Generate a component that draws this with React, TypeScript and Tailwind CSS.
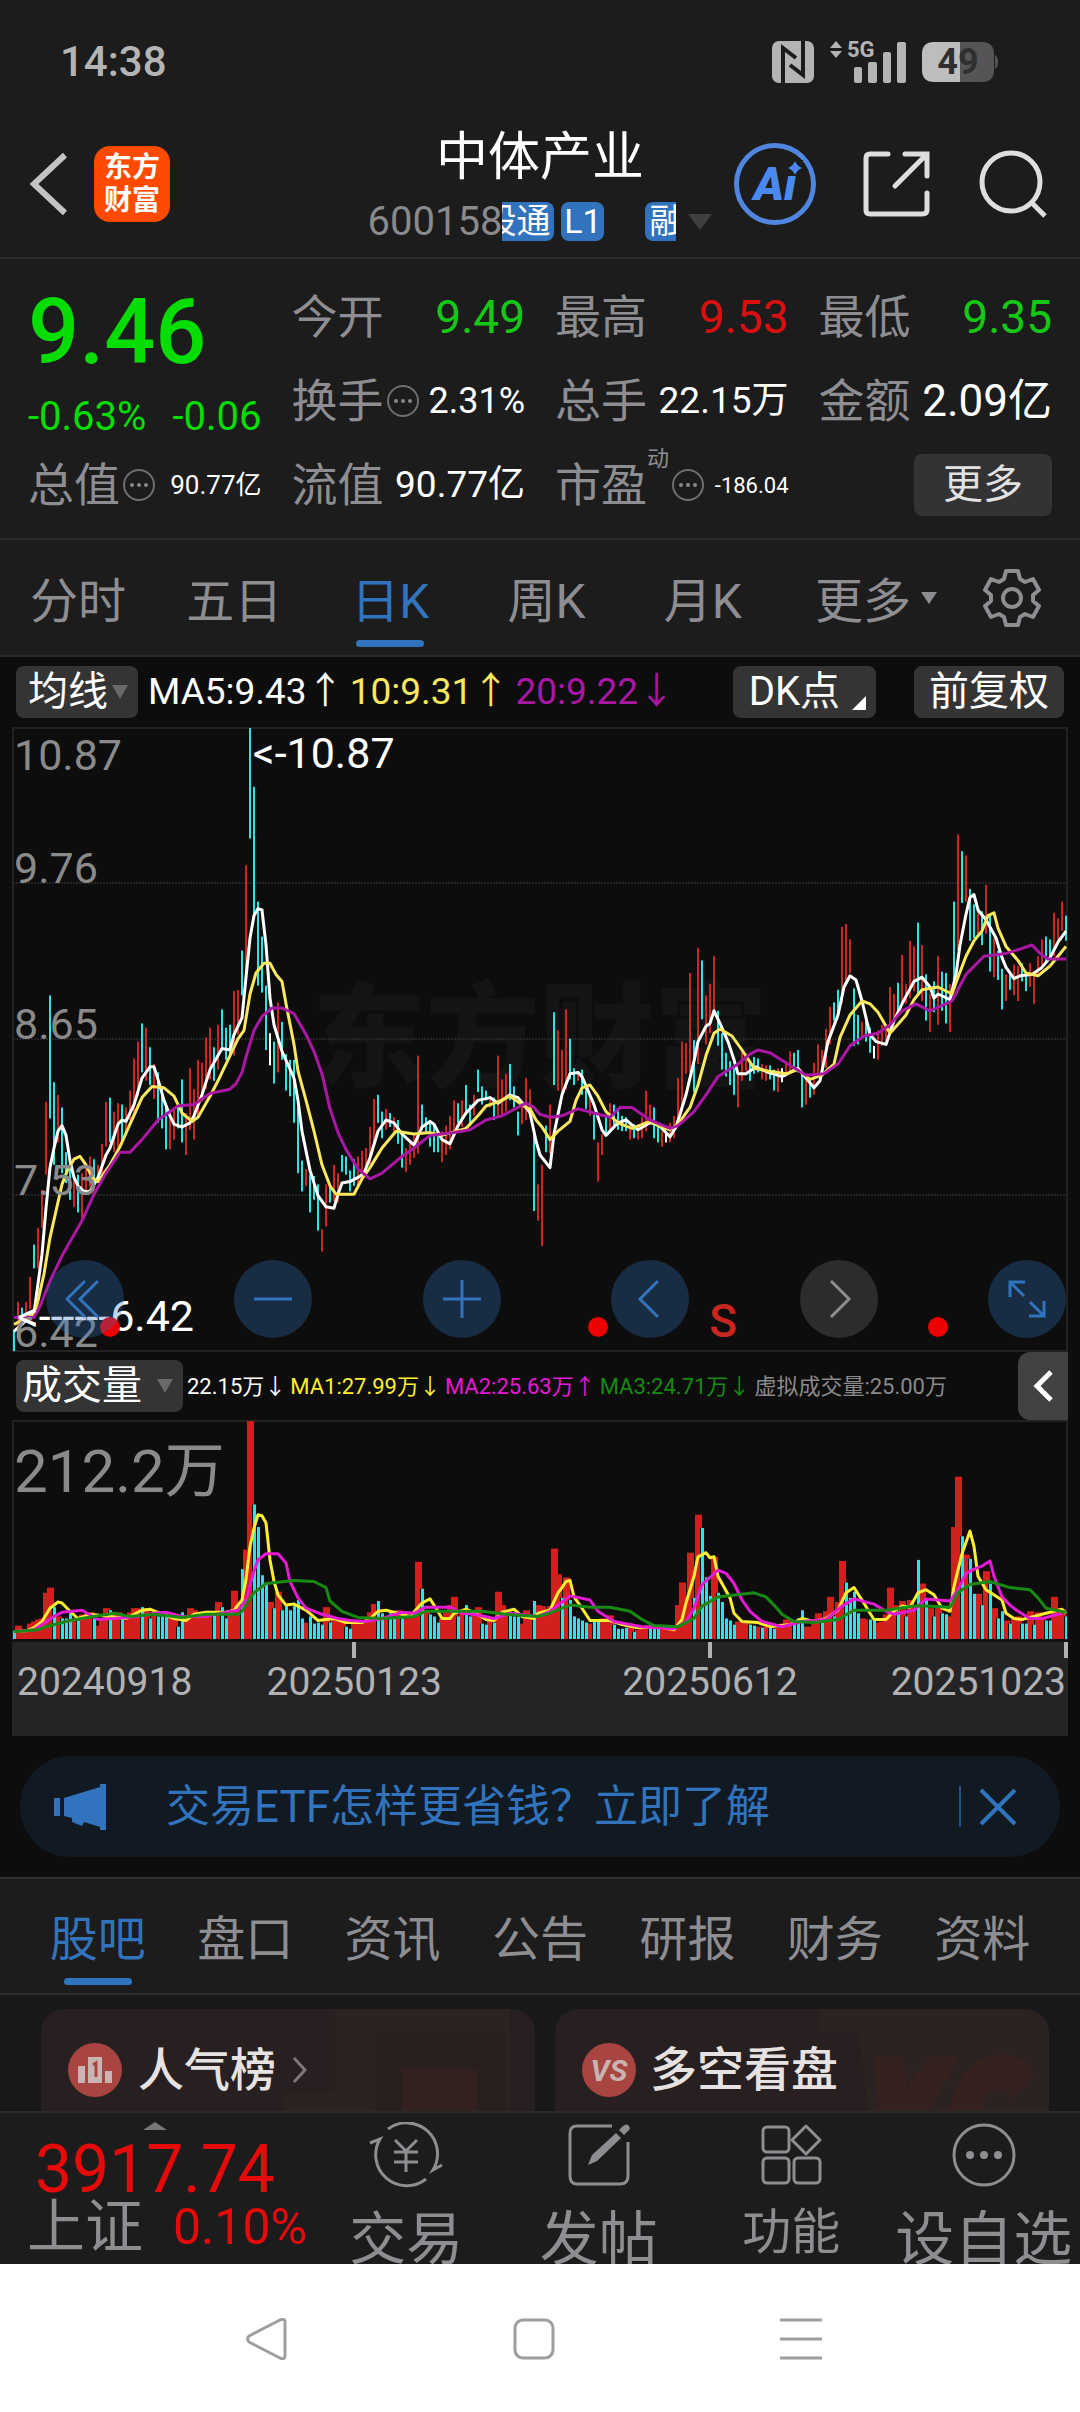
import React from 'react'

const FONT = "font-['Roboto','Noto_Sans_CJK_SC',sans-serif]"

/* ---------- data ---------- */

// r = up, c = down, w = flat; then high,low in cents
const CANDLES = `c657,642 r677,651 c673,663 r677,667 r695,672 c718,701 r730,701 r757,730 r820,768 c896,808
c834,775 r825,791 c816,769 c784,762 c778,750 r768,745 c768,741 r769,736 r773,754 r781,759
c779,763 r775,762 r790,768 r820,788 c823,791 r813,784 r819,787 c818,791 r816,796 r828,807
r851,813 r863,824 c876,841 r873,835 c859,832 r847,822 c841,805 c831,801 c818,786 r813,786
r816,793 c817,801 c836,791 r812,782 r844,800 r829,793 r850,810 r848,820 r866,829 r873,836
c859,835 r875,843 c886,857 c873,850 c875,854 r899,853 r900,868 c928,896 r989,904 c1087,1008
c1045,954 c963,903 c938,898 c903,857 w869,846 c863,833 r891,841 c877,850 c854,828 c850,824
c850,805 c816,769 c778,756 r772,760 c768,741 c767,750 c761,728 r729,713 r761,731 c759,748
r775,749 r769,748 c782,770 c781,768 c771,756 c779,760 r781,760 r785,767 r787,768 r802,775
r822,790 c825,805 c813,794 r815,800 c812,802 r809,798 c807,790 c798,773 r787,770 r792,775
r797,780 r853,783 c818,800 c809,797 c805,788 c804,784 c797,784 r799,777 r803,782 r810,786
r821,797 c819,805 r821,802 c832,813 c818,803 r825,810 c843,827 c831,818 c828,821 r824,816
c823,807 r853,810 r836,811 r840,813 c847,821 c831,816 c813,796 r819,804 r837,807 r829,813
c797,742 r761,735 r775,717 c803,784 r818,783 c884,832 r871,828 r857,823 r886,829 c865,836
c844,832 r841,835 c843,825 c830,815 r823,810 c811,793 r791,763 r797,782 c810,797 r819,799
c818,803 c815,800 c810,799 c809,799 r803,793 c804,794 r804,793 r809,794 r828,799 r818,804
c816,794 c805,791 r799,788 w799,791 r805,791 r810,794 r837,802 r863,813 r862,840 r912,841
c864,827 r930,847 c921,879 r896,861 r904,869 r924,885 c885,860 c869,843 c855,838 c849,832
c844,825 r841,816 r856,835 r853,842 c847,835 c852,840 c851,841 r847,836 r846,835 c846,836
c843,828 r844,827 w844,834 r849,838 r856,841 c855,842 c857,841 c842,816 r836,818 c835,823
r848,825 r861,838 r857,842 r872,844 r888,861 c891,878 c900,880 r945,890 r947,904 r936,912
c901,860 c882,861 r877,865 c878,863 c873,855 w860,851 r871,850 r875,860 r873,861 r902,868
r897,880 c905,882 r925,890 r904,890 r935,894 r931,899 c948,896 r932,892 c911,878 r897,870
c906,884 r924,875 c913,885 c912,876 r904,870 c963,904 r1011,928 c999,962 r996,963 c972,935
c961,937 r959,940 c956,932 r975,940 c954,913 r937,909 c928,907 c915,886 r911,892 c913,900
r918,896 r917,892 c919,906 c913,899 r919,902 r913,890 r924,910 r936,915 c938,919 c936,922
r955,924 r951,935 r963,942 c953,935`
  .split(/\s+/)
  .map((s) => {
    const [high, low] = s.slice(1).split(',').map(Number)
    return { kind: s[0], high, low }
  })

// volume in 万, negative on down days
const VOLUMES = [
  -8, 13, 8, 8, 15, 17, 19, 20, 45, 50, -31, 22, -20, -20, -25, 20, -18, 24, 20, 26, -20, 13, 20, 30, -28, 25, 26, -20, 18, 26,
  30, 30, -31, 30, -20, 26, -22, -22, -22, 24, 22, -12, -26, 22, 30, 28, 25, 25, 26, 26, -24, 36, -31, -20, 25, 47, 34, -68, 87, 212,
  -131, -109, -62, -54, 36, -30, 46, -28, -32, -28, -32, -38, -20, 16, -22, -15, -16, -14, 31, -16, 20, 18, 17, -12, -10, 16, 16, 17, 18, 26,
  34, -37, -25, 22, -25, -20, 28, -20, 20, 20, 25, 75, -49, 28, -24, -22, -16, 20, 28, 33, 41, -22, 26, -33, -22, 26, 31, -15, -14, 20,
  -16, 46, 33, 24, -24, -22, -22, 15, 28, 24, -37, 33, 32, 24, 32, 88, 63, -40, 60, -38, -22, -20, -18, -16, 15, -18, -17, 20, 20, 23,
  -14, -10, -10, -11, 12, -7, 9, 11, 13, -11, -11, -10, 10, 10, 9, 12, 33, 55, 40, 84, -40, 121, -108, -60, -42, 80, -45, -36, -20, -18,
  -14, 17, 17, 17, -14, -13, 12, -11, 12, -11, -10, 11, 15, 19, 17, -17, -20, -28, 12, 12, 18, 25, -16, 27, 41, -22, 36, 76, -55, -40,
  -46, -25, 20, 19, -19, -20, 16, 17, 24, 50, 33, -27, 37, -22, 38, 32, -77, 54, -38, 30, -22, 33, -25, -24, 22, 109, 158, -100, 82, -78,
  -44, 44, -33, 66, -54, 30, -20, -27, 18, -15, 20, 22, -15, -15, 27, -14, 26, 20, -18, -18, 41, 30, 29, -22,
]

// moving averages as "day,value" knots
const MA5 = `0,656 5,669 6,690 7,711 8,744 9,773 10,787 11,799 12,803 13,796 14,778 15,766 16,760 17.5,756 19,756 21,766 23,782 24,787 26,804 27,807 28,806 30,818 32,837 34,845 35,845 36,836 37.5,821 39,810 40,804 42,802 44,805 45,810 47,825 49,843 51,853 52,858 54,857 55,868 57,880 58,909 59,937 60,953 61,958 62,957 63,932 64,894 65,875 67,856 70,837 71,821 72,799 74,771 76,753 78,745 80,744 81,754 82,762 84,763 86,766 87.5,769 89,780 91,799 93,807 95,805 97,797 100,789 102,802 104,806 105,804 107,793 109,790 111,803 113,812 116,821 119,823 121,819 124,825 126,823 128,816 129,812 130.5,792 131.5,782 134,773 135,797 137,825 139,840 141,841 142,838 145,818 147,800 148,796 151,805 153,807 156,800 159,805 161,804 164,795 165.5,802 168,825 170,849 171,863 173,874 174,876 175,885 176.5,876 178.5,863 180,850 181,840 183,840 185.5,845 188.5,841 192,838 196,844 198,837 200,830 201.5,835 203.5,863 206,882 207.5,902 209,910 210.5,907 212,892 214,868 215.5,863 218,861 220,878 222,890 225,906 227,909 229,902 230,894 231,897 234,893 235.5,911 236.5,932 238,954 239,966 240,968 241,957 243,950 245.5,937 247,923 248,916 250,908 251.5,910 254.5,911 257,916 259,923 261,934 263,942`
const MA10 = `0,661 5,668 6,678 7.5,697 9,723 10.5,742 12,761 13.5,772 15,779 16.5,781 18,775 19.5,766 21,763 24,775 26.5,788 29,804 32,823 34.5,831 37.5,830 40,824 42,812 44.5,806 46,809 49,824 51,835 54,853 56,865 57.5,871 59,897 60.5,912 62.5,919 64,919 65.5,911 67,906 68,890 70,861 71,842 73,821 75,799 77,775 79,760 80.5,754 85,754 87,765 89,773 92,787 95.5,799 100,797 104,798 107,796 113,801 116,810 118,817 121,820 124,824 128,816 129,815 130.5,807 132,802 134,793 136,799 139,806 140.5,821 142,830 144,832 146,824 148,813 151,805 154.5,801 159,806 161,803 164,800 166,804 169,816 171,832 173,853 175,869 176.5,872 179.5,867 182,857 185,844 188.5,842 193,840 196,843 199,836 202,839 205,847 206.5,866 209,882 212,892 214,890 216,884 219,869 221.5,877 223,882 225,893 227,900 231,902 234.5,897 236,909 238,924 240,935 242,942 243.5,953 245,955 246,944 248,931 251,921 253,912 256,910 259,917 261,924 263,931`
const MA20 = `0,666 5,666 6.5,674 9,692 12,710 15,725 17,735 20,754 23,769 26.5,784 29,784 32,793 36,807 41,817 45,818 49,826 54,829 55.5,833 57,841 58,852 60,871 62,881 64.5,887 67,887 70,883 73,868 75,856 77,840 79,815 81,798 83,786 86,772 89,765 92,769 97,781 100,787 104,796 110,798 114,800 118,807 122,810 128,819 130,816 131.5,811 134,809 137,810 141,815 149,809 151.5,816 154.5,816 159,807 164,801 166,803 170,813 173,825 176,838 181,847 184,854 186,857 189,855 193.5,847 198,839 202.5,840 206,847 209,860 212.5,867 216,869 219,875 222,885 225.5,890 229,885 234.5,892 238,911 242.5,924 248,926 251.5,929 254.5,932 256.5,926 258.5,922 263,922`
const VMA1 = `0,7 3,8 5,11 7,17 9,30 11,36 12,35 14,27 16,20 19,24 24,22 28,20 32,28 34,29 36,26 40,20 43,18 45,24 48,26 53,26 55,28 57,38 58,58 59,90 60,108 61,121 62,120 63,113 64,77 65,56 66,43 68,33 70,34 73,28 76,18 80,20 83,16 87,16 89,20 91,27 93,28 96,25 99,22 102,35 104,39 106,27 107,20 109,20 110,25 113,29 115,26 118,19 120,18 122,26 125,29 127,22 130,20 131,25 134,28 136,45 137,50 138,56 139,57 140,41 142,30 144,18 149,18 152,14 156,11 161,12 165,9 167,19 168,35 170,61 171,80 173,84 174,79 175,80 176,61 179,40 180,25 182,17 186,16 189,12 194,14 197,20 200,17 203,20 206,28 208,45 210,50 212,38 214,25 215,19 218,19 220,27 222,32 224,31 226,45 228,48 230,43 232,30 234,27 235,51 237,83 239,105 240,90 241,61 243,48 247,38 248,25 250,20 252,19 255,22 258,25 262,29 263,25`
const VMA2 = `0,7 5,9 7,14 10,22 12,26 17,28 21,19 25,20 31,22 35,25 38,26 42,22 48,22 53,26 56,28 58,38 60,66 61,77 63,83 66,83 68,74 69,56 71,40 73,30 77,24 81,20 84,18 88,17 92,20 97,26 100,25 103,31 109,31 112,25 115,24 120,20 124,25 131,22 134,27 139,42 144,38 146,27 150,17 157,12 165,10 168,17 170,30 172,53 176,67 178,64 180,54 182,38 184,27 187,17 192,12 197,17 203,19 207,32 210,39 215,34 218,27 220,24 225,28 228,39 234,37 236,48 238,64 240,68 242,71 244,76 245,61 247,41 249,33 251,27 254,20 257,20 262,25`
const VMA3 = `0,7 6,9 8,12 14,18 20,22 25,25 29,22 35,24 42,21 48,24 56,24 57,27 60,45 63,54 70,57 75,56 78,50 79,37 82,27 86,21 92,20 100,22 103,27 117,27 123,24 131,22 133,24 139,33 144,31 149,31 154,27 157,19 160,13 166,12 170,20 172,32 176,41 185,45 188,41 190,33 192,24 195,17 200,16 206,19 210,28 218,28 225,32 228,32 234,31 236,45 239,53 244,56 249,50 254,48 256,40 258,30 263,26`

const W = 1054
const PRICE_H = 623
const VOL_H = 218
const LAST_DAY = 263

const dayX = (i: number, last = LAST_DAY) => (i * (W - 2)) / last
const barX = (i: number, count: number) => Math.round(dayX(i, count - 1))
const priceY = (v: number) => ((1087 - v) * PRICE_H) / 445
const volY = (v: number) => VOL_H - (v * VOL_H) / 212.2

const knots = (src: string, y: (v: number) => number) =>
  src
    .split(' ')
    .map((k) => {
      const [d, v] = k.split(',').map(Number)
      return `${(dayX(d) + 1).toFixed(1)},${y(v).toFixed(1)}`
    })
    .join(' ')

const candleColor: Record<string, string> = { r: '#c82822', c: '#2fe3e0', w: '#ffffff' }

/* ---------- small pieces ---------- */

function Dots() {
  return (
    <svg viewBox="0 0 34 34" className="w-[34px] h-[34px] shrink-0">
      <circle cx="17" cy="17" r="15" fill="none" stroke="#6f6f72" strokeWidth="2" />
      <circle cx="10" cy="17" r="2" fill="#8a8a8d" />
      <circle cx="17" cy="17" r="2" fill="#8a8a8d" />
      <circle cx="24" cy="17" r="2" fill="#8a8a8d" />
    </svg>
  )
}

function Caret({ className }: { className: string }) {
  return (
    <svg viewBox="0 0 16 14" preserveAspectRatio="none" className={className}>
      <path d="M0 0H16L8 14Z" fill="currentColor" />
    </svg>
  )
}

interface StatProps {
  label: string
  value: string
  valueClass: string
  info?: boolean
  sup?: string
}

function Stat({ label, value, valueClass, info, sup }: StatProps) {
  return (
    <div className="flex items-center justify-between whitespace-nowrap">
      <dt className="flex items-center text-[46px] text-[#8e8e92]">
        {label}
        {sup && <sup className="text-[22px] self-start mt-2 leading-none">{sup}</sup>}
        {info && <span className="ml-[2px]"><Dots /></span>}
      </dt>
      <dd className={valueClass}>{value}</dd>
    </div>
  )
}

/* ---------- sections ---------- */

function StatusBar() {
  return (
    <div className="flex items-center justify-between h-[115px] pl-[60px] pr-[82px] pt-2 text-[#b4b4b4]">
      <span className="text-[42px] font-medium">14:38</span>
      <div className="flex items-center">
        <svg viewBox="0 0 42 42" className="w-[42px] h-[42px]">
          <rect width="42" height="42" rx="7" fill="#b4b4b4" />
          <path d="M11 42V7L24 17M31 0V34L18 24" fill="none" stroke="#1c1c1c" strokeWidth="4" />
        </svg>
        <div className="relative w-[76px] h-[42px] ml-4">
          <svg viewBox="0 0 76 42" className="w-full h-full">
            <path d="M0 7L6 0L12 7ZM0 10H12L6 17Z" fill="#b4b4b4" />
            <rect x="24" y="26" width="8" height="16" rx="2" fill="#b4b4b4" />
            <rect x="38" y="21" width="9" height="21" rx="2" fill="#b4b4b4" />
            <rect x="53" y="11" width="8" height="31" rx="2" fill="#b4b4b4" />
            <rect x="67" y="1" width="9" height="41" rx="2" fill="#b4b4b4" />
          </svg>
          <span className="absolute left-[17px] top-0 text-[22px] leading-[18px] font-bold">5G</span>
        </div>
        <div className="relative w-[76px] h-[40px] ml-4">
          <svg viewBox="0 0 76 40" className="w-full h-full">
            <path d="M38 0H60Q72 0 72 12V28Q72 40 60 40H38Z" fill="#555" />
            <path d="M38 0H12Q0 0 0 12V28Q0 40 12 40H38Z" fill="#bdbdbd" />
            <path d="M73 13Q76 15 76 20T73 27Z" fill="#555" />
          </svg>
          <span className="absolute inset-0 pr-1 text-center text-[36px] leading-[40px] font-bold text-[#2f2f2f]">49</span>
        </div>
      </div>
    </div>
  )
}

function Header() {
  return (
    <header className="grid grid-cols-[360px_1fr_360px] items-center h-[144px] pb-[5px] border-b-2 border-[#2a2a2c]">
      <div className="flex items-center pl-7">
        <button aria-label="返回">
          <svg viewBox="0 0 40 64" className="w-10 h-16">
            <path d="M37 3L6 32L37 61" fill="none" stroke="#c4c4c4" strokeWidth="6" />
          </svg>
        </button>
        <div className="flex flex-col items-center justify-center w-[76px] h-[76px] ml-[26px] rounded-2xl bg-[#ff4a00] text-white text-[28px] leading-[33px] font-bold">
          <span>东方</span>
          <span>财富</span>
        </div>
      </div>
      <div className="flex flex-col items-center">
        <h1 className="text-[52px] leading-[64px] text-white">中体产业</h1>
        <div className="flex items-center mt-3 h-10 text-[34px] leading-[39px] text-white">
          <span className="text-[40px] text-[#8a8a8d]">600158</span>
          <span className="flex justify-end w-[52px] overflow-hidden rounded-r-lg bg-[#3173bd] pr-1 whitespace-nowrap">股通</span>
          <span className="w-[43px] ml-[7px] rounded-lg bg-[#3173bd] text-center">L1</span>
          <span className="w-[31px] ml-[41px] pl-1 overflow-hidden rounded-l-lg bg-[#3173bd]">融</span>
          <Caret className="w-6 h-4 ml-3 text-[#3f3f41]" />
        </div>
      </div>
      <div className="flex items-center pl-[14px]">
        <button className="relative w-[82px] h-[82px] rounded-full border-[5px] border-[#5186e0] text-[46px] leading-[72px] font-black italic text-[#4a8af0]">
          Ai
          <svg viewBox="0 0 16 16" className="absolute right-[8px] top-[12px] w-4 h-4 bg-[#1c1c1c]">
            <path d="M8 1Q10 6 15 8Q10 10 8 15Q6 10 1 8Q6 6 8 1Z" fill="currentColor" />
          </svg>
        </button>
        <button aria-label="分享" className="ml-[46px]">
          <svg viewBox="0 0 68 68" className="w-[68px] h-[68px]" fill="none" stroke="#dedede" strokeWidth="5" strokeLinecap="round">
            <path d="M26 4H8Q4 4 4 8V60Q4 64 8 64H60Q65 64 65 60V43" />
            <path d="M43 4H65V26M64 5L33 36" />
          </svg>
        </button>
        <button aria-label="搜索" className="ml-[48px]">
          <svg viewBox="0 0 70 70" className="w-[70px] h-[70px]" fill="none" stroke="#dedede" strokeWidth="5">
            <circle cx="33" cy="33" r="29" />
            <path d="M54 54L67 67" />
          </svg>
        </button>
      </div>
    </header>
  )
}

function Quote() {
  return (
    <section className="grid grid-cols-4 grid-rows-[84px_84px_84px] gap-x-[30px] px-[28px] pt-4 h-[281px] border-b-2 border-[#2a2a2c]">
      <div className="row-span-2 flex flex-col justify-between text-[#05dd05]">
        <strong className="text-[90px] leading-[116px] font-medium">9.46</strong>
        <div className="flex justify-between text-[40px] leading-[52px] whitespace-nowrap">
          <span>-0.63%</span>
          <span>-0.06</span>
        </div>
      </div>
      <dl className="contents">
        <Stat label="今开" value="9.49" valueClass="text-[46px] text-[#16c816]" />
        <Stat label="最高" value="9.53" valueClass="text-[46px] text-[#d81010]" />
        <Stat label="最低" value="9.35" valueClass="text-[46px] text-[#16c816]" />
        <Stat label="换手" value="2.31%" info valueClass="text-[36px] text-white" />
        <Stat label="总手" value="22.15万" valueClass="text-[37px] text-white" />
        <Stat label="金额" value="2.09亿" valueClass="text-[44px] text-white" />
        <Stat label="总值" value="90.77亿" info valueClass="text-[26px] text-white" />
        <Stat label="流值" value="90.77亿" valueClass="text-[37px] text-white" />
        <Stat label="市盈" value="-186.04" info sup="动" valueClass="text-[22px] text-white" />
      </dl>
      <div className="flex items-center justify-end">
        <button className="w-[138px] h-[62px] rounded-lg bg-[#333335] text-[40px] text-[#e2e2e2]">更多</button>
      </div>
    </section>
  )
}

function PeriodTabs() {
  const tabs = ['分时', '五日', '日K', '周K', '月K']
  return (
    <nav className="flex h-[117px] border-b-2 border-[#2a2a2c] text-[48px] text-[#8e8e92]">
      {tabs.map((t) => (
        <button key={t} className={`relative flex-1 pt-2 ${t === '日K' ? 'text-[#3173bd]' : ''}`}>
          {t}
          {t === '日K' && <span className="absolute bottom-2 left-1/2 -translate-x-1/2 w-[68px] h-[7px] rounded-full bg-[#3173bd]" />}
        </button>
      ))}
      <button className="flex-1 flex items-center justify-end gap-[10px] pt-2 pr-2">
        更多
        <Caret className="w-4 h-3 mb-2" />
      </button>
      <button aria-label="设置" className="flex items-center justify-center w-[135px] pr-[2px]">
        <svg viewBox="0 0 60 60" className="w-[60px] h-[60px]" fill="none" stroke="#8e8e92" strokeWidth="4" strokeLinejoin="round">
          <path d="M24 3H36L38 11L43 14L51 11L57 22L51 27V33L57 38L51 49L43 46L38 49L36 57H24L22 49L17 46L9 49L3 38L9 33V27L3 22L9 11L17 14L22 11Z" />
          <circle cx="30" cy="30" r="9" />
        </svg>
      </button>
    </nav>
  )
}

const pill = 'flex items-center h-[52px] rounded-lg bg-[#343434] text-[40px] text-white whitespace-nowrap'

function RoundButton({ label, gray, children }: { label: string; gray?: boolean; children: React.ReactNode }) {
  return (
    <button
      aria-label={label}
      className={`flex items-center justify-center w-[78px] h-[78px] rounded-full ${gray ? 'bg-[#2c2c2c] text-[#8e8e8e]' : 'bg-[#3174c3]/30 text-[#3173bd]'}`}
    >
      <svg viewBox="0 0 40 40" className="w-10 h-10" fill="none" stroke="currentColor" strokeWidth="3">
        {children}
      </svg>
    </button>
  )
}

function PriceChart() {
  return (
    <div className="relative h-[625px] border-2 border-[#222224]">
      <div className="absolute inset-0 flex items-center justify-center text-[114px] font-black text-[#141415]">东方财富</div>
      <svg
        viewBox={`0 0 ${W} ${PRICE_H}`}
        preserveAspectRatio="none"
        className="absolute -left-px -top-px w-[calc(100%+2px)] h-[calc(100%+2px)]"
      >
        {[155, 311, 467].map((y) => (
          <line key={y} x1="0" x2={W} y1={y} y2={y} stroke="#252527" strokeWidth="2" strokeDasharray="2 1" />
        ))}
        {CANDLES.map((c, i) => (
          <rect
            key={i}
            x={barX(i, CANDLES.length)}
            y={priceY(c.high)}
            width="2"
            height={priceY(c.low) - priceY(c.high)}
            fill={candleColor[c.kind]}
          />
        ))}
        <g fill="none" strokeWidth="3" strokeLinejoin="round">
          <polyline points={knots(MA5, priceY)} stroke="#ffffff" />
          <polyline points={knots(MA10, priceY)} stroke="#fbe85c" />
          <polyline points={knots(MA20, priceY)} stroke="#ab17a5" />
        </g>
      </svg>
      <div className="absolute inset-0 text-[43px] leading-[44px] text-[#8a8a8a]">
        <span className="absolute left-0 top-[4px]">10.87</span>
        <span className="absolute left-0 top-[117px]">9.76</span>
        <span className="absolute left-0 top-[273px]">8.65</span>
        <span className="absolute left-0 top-[429px]">7.53</span>
        <span className="absolute left-0 top-[581px]">6.42</span>
        <span className="absolute left-[22.7%] top-[2px] text-white">&lt;-10.87</span>
        <span className="absolute left-[3px] top-[565px] text-white">&lt;------6.42</span>
        <span className="absolute left-[66.1%] top-[570px] text-[46px] font-medium text-[#c8261f]">S</span>
      </div>
      <span className="absolute left-[8.2%] top-[588px] w-5 h-5 rounded-full bg-[#ee0000]" />
      <span className="absolute left-[54.6%] top-[588px] w-5 h-5 rounded-full bg-[#ee0000]" />
      <span className="absolute left-[86.9%] top-[588px] w-5 h-5 rounded-full bg-[#ee0000]" />
      <div className="absolute left-[32px] right-0 bottom-[12px] flex justify-between">
        <RoundButton label="最早">
          <path d="M20 2L2 20L20 38M33 2L15 20L33 38" />
        </RoundButton>
        <RoundButton label="缩小">
          <path d="M1 20H39" />
        </RoundButton>
        <RoundButton label="放大">
          <path d="M1 20H39M20 1V39" />
        </RoundButton>
        <RoundButton label="前移">
          <path d="M28 2L10 20L28 38" />
        </RoundButton>
        <RoundButton label="后移" gray>
          <path d="M12 2L30 20L12 38" />
        </RoundButton>
        <RoundButton label="全屏">
          <path d="M18 3H3V18M3 3L17 17M37 22V37H22M37 37L23 23" />
        </RoundButton>
      </div>
    </div>
  )
}

function VolumeChart() {
  return (
    <div className="relative h-[220px] border-2 border-b-0 border-[#222224]">
      <svg
        viewBox={`0 0 ${W} ${VOL_H}`}
        preserveAspectRatio="none"
        className="absolute -left-px -top-px w-[calc(100%+2px)] h-full"
      >
        {VOLUMES.map((v, i) => v > 0 && (
          <rect key={i} x={Math.max(0, barX(i, VOLUMES.length) - 2)} y={volY(v)} width="7" height={VOL_H - volY(v)} fill="#d41f1f" />
        ))}
        {VOLUMES.map((v, i) => v < 0 && (
          <g key={i}>
            <rect x={barX(i, VOLUMES.length) - 1} y={volY(-v)} width="4" height={VOL_H - volY(-v)} fill="#0d0d0d" />
            <rect x={barX(i, VOLUMES.length)} y={volY(-v)} width="3" height={VOL_H - volY(-v)} fill="#2fe3e0" />
          </g>
        ))}
        <g fill="none" strokeWidth="3" strokeLinejoin="round">
          <polyline points={knots(VMA1, volY)} stroke="#fdee30" />
          <polyline points={knots(VMA2, volY)} stroke="#e619d4" />
          <polyline points={knots(VMA3, volY)} stroke="#178a12" />
        </g>
      </svg>
      <span className="absolute left-0 top-[15px] text-[60px] leading-[70px] text-[#8a8a8a]">212.2万</span>
    </div>
  )
}

function Charts() {
  return (
    <section className="px-3 bg-[#0d0d0d]">
      <div className="flex items-center h-[70px] px-1 text-[37px] whitespace-nowrap">
        <button className={`${pill} pl-3 pr-[10px] gap-1`}>
          均线
          <Caret className="w-4 h-[14px] text-[#6a6a6a]" />
        </button>
        <span className="ml-[10px] text-white">MA5:9.43↑</span>
        <span className="ml-[6px] text-[#fbe85c]">10:9.31↑</span>
        <span className="ml-[6px] text-[#ab17a5]">20:9.22↓</span>
        <button className={`${pill} ml-auto pl-4 pr-[10px]`}>
          DK点
          <svg viewBox="0 0 14 14" className="w-[14px] h-[14px] ml-3 mb-2 self-end">
            <path d="M14 0V14H0Z" fill="white" />
          </svg>
        </button>
        <button className={`${pill} ml-[38px] px-[15px]`}>前复权</button>
      </div>
      <PriceChart />
      <div className="flex items-center h-[68px] pl-1 text-[22px] whitespace-nowrap">
        <button className={`${pill} pl-[6px] pr-[10px] gap-[15px]`}>
          成交量
          <Caret className="w-4 h-[14px] text-[#6a6a6a]" />
        </button>
        <div className="flex gap-1 ml-1">
          <span className="text-white">22.15万↓</span>
          <span className="text-[#fdee30]">MA1:27.99万↓</span>
          <span className="text-[#e619d4]">MA2:25.63万↑</span>
          <span className="text-[#178a12]">MA3:24.71万↓</span>
          <span className="text-[#8a8a8a]">虚拟成交量:25.00万</span>
        </div>
        <button aria-label="展开" className="flex items-center justify-center w-[50px] h-[68px] ml-auto rounded-l-xl bg-[#424242]">
          <svg viewBox="0 0 20 32" className="w-5 h-8">
            <path d="M18 2L4 16L18 30" fill="none" stroke="white" strokeWidth="5" />
          </svg>
        </button>
      </div>
      <VolumeChart />
      <div className="relative h-[96px] border-t-2 border-[#111] bg-[#242426] text-[39px] leading-[80px] text-[#b2b2b2]">
        <span className="absolute left-[32.4%] top-0 w-1 h-4 -translate-x-1/2 bg-[#b2b2b2]" />
        <span className="absolute left-[66.1%] top-0 w-1 h-4 -translate-x-1/2 bg-[#b2b2b2]" />
        <span className="absolute right-0 top-0 w-1 h-4 bg-[#b2b2b2]" />
        <span className="absolute left-[5px]">20240918</span>
        <span className="absolute left-[32.4%] -translate-x-1/2">20250123</span>
        <span className="absolute left-[66.1%] -translate-x-1/2">20250612</span>
        <span className="absolute right-[2px]">20251023</span>
      </div>
    </section>
  )
}

function Banner() {
  return (
    <div className="px-5 py-5 bg-[#0d0d0d]">
      <div className="flex items-center h-[101px] pl-[34px] pr-[43px] rounded-full bg-[#111a22] text-[#3173bd]">
        <svg viewBox="0 0 52 46" className="w-[52px] h-[46px]" fill="currentColor">
          <path d="M0 14H6V32H0ZM10 14L46 3V0H52V46H46V43L30 38L28 42L18 38V34L10 32Z" />
        </svg>
        <a href="#etf" className="ml-[60px] text-[44px]">交易ETF怎样更省钱？立即了解</a>
        <span className="ml-auto w-[2px] h-[41px] bg-[#254f80]" />
        <button aria-label="关闭" className="ml-[18px]">
          <svg viewBox="0 0 38 38" className="w-[38px] h-[38px]" fill="none" stroke="currentColor" strokeWidth="4">
            <path d="M2 2L36 36M36 2L2 36" />
          </svg>
        </button>
      </div>
    </div>
  )
}

function InfoTabs() {
  const tabs = ['股吧', '盘口', '资讯', '公告', '研报', '财务', '资料']
  return (
    <nav className="flex h-[118px] px-6 border-y-2 border-[#2e2e30] text-[48px] text-[#8e8e92]">
      {tabs.map((t, i) => (
        <button key={t} className={`relative flex-1 pt-2 ${i === 0 ? 'text-[#3173bd]' : ''}`}>
          {t}
          {i === 0 && <span className="absolute bottom-2 left-1/2 -translate-x-1/2 w-[68px] h-[7px] rounded-full bg-[#3173bd]" />}
        </button>
      ))}
    </nav>
  )
}

function Cards() {
  return (
    <section className="flex gap-5 h-[116px] pl-[41px] pr-[31px] pt-[14px] bg-[#18181a] overflow-hidden text-[46px] font-medium text-[#e6e2e2]">
      <a href="#rank" className="relative flex-1 flex items-center h-[122px] pl-[27px] rounded-t-3xl bg-[#282020] overflow-hidden">
        <svg viewBox="0 0 250 110" className="absolute right-0 top-0 h-[110px]">
          <path d="M50 0H225V110H0V85H50Z" fill="#2b2221" />
          <path d="M90 24H222V110H90Z" fill="#291f1f" />
          <path d="M117 60H192V110H117Z" fill="#33211f" />
        </svg>
        <svg viewBox="0 0 54 54" className="relative w-[54px] h-[54px]">
          <circle cx="27" cy="27" r="27" fill="#a84540" />
          <path d="M10 23H17V40H10ZM20 14H34V40H20ZM37 28H44V40H37Z" fill="#c9b4b2" />
          <path d="M25 22L28 20V34" fill="none" stroke="#a84540" strokeWidth="3" />
        </svg>
        <span className="relative ml-4">人气榜</span>
        <svg viewBox="0 0 16 28" className="relative w-4 h-7 ml-4">
          <path d="M2 2L13 14L2 26" fill="none" stroke="#7d7777" strokeWidth="3" />
        </svg>
      </a>
      <a href="#vs" className="relative flex-1 flex items-center h-[122px] pl-[27px] rounded-t-3xl bg-[#282020] overflow-hidden">
        <svg viewBox="0 0 230 110" className="absolute right-0 top-0 h-[110px]">
          <path d="M0 0H230V110H50L40 22H0Z" fill="#2b2221" />
          <path d="M56 48H85L88 80L110 48H140L105 110H60Z" fill="#35221f" />
          <path d="M215 65Q205 42 175 46Q140 52 128 110H165Q160 82 180 80Q192 80 194 90Z" fill="#35221f" />
        </svg>
        <span className="relative flex items-center justify-center w-[54px] h-[54px] rounded-full bg-[#a84540] text-[30px] font-bold italic text-[#c9b4b2]">VS</span>
        <span className="relative ml-[14px] text-[47px]">多空看盘</span>
      </a>
    </section>
  )
}

const iconProps = { fill: 'none', stroke: '#8e8e92', strokeWidth: 3 }

function BottomBar() {
  return (
    <footer className="flex h-[153px] border-t-2 border-[#2a2a2c] overflow-hidden text-[#8e8e92] whitespace-nowrap">
      <button className="flex flex-col items-start w-[310px] pl-[27px] pt-[9px] text-[#e60a0a]">
        <Caret className="w-6 h-2 ml-[116px] rotate-180 text-[#77777a]" />
        <span className="pl-2 text-[66px] leading-[79px]">3917.74</span>
        <span className="flex items-center h-[36px] gap-[30px] text-[50px]">
          <span className="text-[58px] text-[#8e8e92]">上证</span>
          0.10%
        </span>
      </button>
      <button className="flex-1 flex flex-col items-center pt-[9px] text-[57px] leading-[104px]">
        <svg viewBox="0 0 74 66" {...iconProps} className="w-[74px] h-[66px] shrink-0">
          <path d="M19 7A31 31 0 0 1 64 48L73 43M1 21L11 17A31 31 0 0 0 57 57" />
          <path d="M26 18L37 29L48 18M25 30H49M25 40H49M37 29V50" />
        </svg>
        交易
      </button>
      <button className="flex-1 flex flex-col items-center pt-[9px] text-[59px] leading-[104px]">
        <svg viewBox="0 0 66 66" {...iconProps} className="w-[66px] h-[66px] shrink-0">
          <path d="M46 4H11Q4 4 4 11V54Q4 62 11 62H54Q62 62 62 54V20" />
          <path d="M22 43L26 33L50 11L55 16L31 39ZM53 8L57 4Q61 1 63 4Q65 7 62 9L58 13Z" fill="#8e8e92" stroke="none" />
        </svg>
        发帖
      </button>
      <button className="flex-1 flex flex-col items-center pt-[9px] text-[49px] leading-[90px]">
        <svg viewBox="0 0 66 66" {...iconProps} className="w-[66px] h-[66px] shrink-0">
          <rect x="5" y="5" width="26" height="25" rx="4" />
          <rect x="5" y="36" width="26" height="25" rx="4" />
          <rect x="36" y="36" width="26" height="25" rx="4" />
          <path d="M48 4L62 18L48 32L34 18Z" strokeLinejoin="round" />
        </svg>
        功能
      </button>
      <button className="flex-1 flex flex-col items-center pt-[9px] text-[59px] leading-[104px]">
        <svg viewBox="0 0 66 66" {...iconProps} className="w-[66px] h-[66px] shrink-0">
          <circle cx="33" cy="33" r="30" />
          <g fill="#8e8e92" stroke="none">
            <circle cx="19" cy="33" r="4" />
            <circle cx="33" cy="33" r="4" />
            <circle cx="47" cy="33" r="4" />
          </g>
        </svg>
        设自选
      </button>
    </footer>
  )
}

function SystemNav() {
  return (
    <nav className="flex items-center justify-center gap-[225px] h-[149px] pr-3 bg-white">
      <button aria-label="Back">
        <svg viewBox="0 0 42 42" className="w-[42px] h-[42px]" fill="none" stroke="#9e9e9e" strokeWidth="3" strokeLinejoin="round">
          <path d="M3 18Q0 21 3 24L34 40Q39 42 39 38V4Q39 0 34 2Z" />
        </svg>
      </button>
      <button aria-label="Home">
        <svg viewBox="0 0 42 42" className="w-[42px] h-[42px]" fill="none" stroke="#9e9e9e" strokeWidth="3">
          <rect x="2" y="2" width="38" height="38" rx="8" />
        </svg>
      </button>
      <button aria-label="Recent">
        <svg viewBox="0 0 42 42" className="w-[42px] h-[42px]" fill="none" stroke="#9e9e9e" strokeWidth="3">
          <path d="M0 2H42M0 21H42M0 40H42" />
        </svg>
      </button>
    </nav>
  )
}

export default function App() {
  return (
    <div className={`bg-[#1c1c1c] ${FONT}`}>
      <StatusBar />
      <Header />
      <Quote />
      <PeriodTabs />
      <Charts />
      <Banner />
      <InfoTabs />
      <Cards />
      <BottomBar />
      <SystemNav />
    </div>
  )
}
